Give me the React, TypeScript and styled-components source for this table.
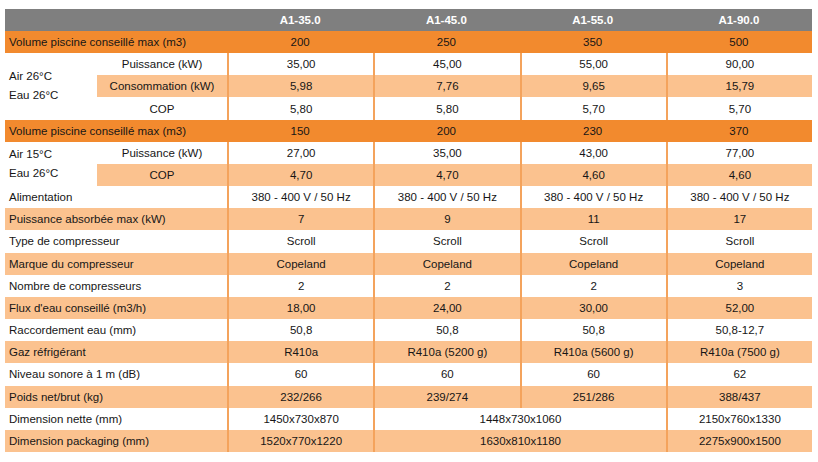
import React from "react";
import styled, { createGlobalStyle, css } from "styled-components";

const GlobalStyle = createGlobalStyle`
  html, body { margin: 0; padding: 0; background: #ffffff; }
  body { font-family: "Liberation Sans", Arial, sans-serif; }
`;

type Tone = "gray" | "orange" | "light" | "white";

const toneColor: Record<Tone, string> = {
  gray: "#7f7f7f",
  orange: "#f28a2e",
  light: "#fbc28f",
  white: "#ffffff",
};

const Page = styled.div`
  padding: 9px 0 0 5px;
`;

const Table = styled.div`
  display: grid;
  width: 807px;
  grid-template-columns: 92px 130px repeat(4, 1fr);
  grid-template-rows: 22px;
  grid-auto-rows: 22.16px;
  font-size: 11.5px;
  color: #161616;
`;

const Cell = styled.div<{
  $tone: Tone;
  $align?: "left" | "center";
  $span?: number;
  $line?: boolean;
}>`
  display: flex;
  align-items: center;
  justify-content: ${(p) => (p.$align === "left" ? "flex-start" : "center")};
  padding-left: ${(p) => (p.$align === "left" ? "4px" : "0")};
  background: ${(p) => toneColor[p.$tone]};
  white-space: nowrap;
  overflow: hidden;
  ${(p) => p.$span && css`grid-column: span ${p.$span};`}
  ${(p) => p.$line && css`border-left: 2px solid #f4a35c;`}
`;

const HeadCell = styled(Cell)`
  color: #ffffff;
  font-weight: bold;
`;

const CondCell = styled.div<{ $rows: number }>`
  grid-row: span ${(p) => p.$rows};
  display: flex;
  flex-direction: column;
  justify-content: center;
  padding-left: 4px;
  line-height: 19px;
  background: #ffffff;
`;

type Val = string | { v: string; span: number };

type SimpleRow = { kind: "simple"; label: string; values: Val[]; tone: Tone };
type GroupRow = {
  kind: "group";
  cond: string[];
  subs: { label: string; values: string[]; tone: Tone }[];
};
type Row = SimpleRow | GroupRow;

const models = ["A1-35.0", "A1-45.0", "A1-55.0", "A1-90.0"];

const rows: Row[] = [
  { kind: "simple", label: "Volume piscine conseillé max (m3)", values: ["200", "250", "350", "500"], tone: "orange" },
  {
    kind: "group",
    cond: ["Air 26°C", "Eau 26°C"],
    subs: [
      { label: "Puissance (kW)", values: ["35,00", "45,00", "55,00", "90,00"], tone: "white" },
      { label: "Consommation (kW)", values: ["5,98", "7,76", "9,65", "15,79"], tone: "light" },
      { label: "COP", values: ["5,80", "5,80", "5,70", "5,70"], tone: "white" },
    ],
  },
  { kind: "simple", label: "Volume piscine conseillé max (m3)", values: ["150", "200", "230", "370"], tone: "orange" },
  {
    kind: "group",
    cond: ["Air 15°C", "Eau 26°C"],
    subs: [
      { label: "Puissance (kW)", values: ["27,00", "35,00", "43,00", "77,00"], tone: "white" },
      { label: "COP", values: ["4,70", "4,70", "4,60", "4,60"], tone: "light" },
    ],
  },
  { kind: "simple", label: "Alimentation", values: ["380 - 400 V / 50 Hz", "380 - 400 V / 50 Hz", "380 - 400 V / 50 Hz", "380 - 400 V / 50 Hz"], tone: "white" },
  { kind: "simple", label: "Puissance absorbée max (kW)", values: ["7", "9", "11", "17"], tone: "light" },
  { kind: "simple", label: "Type de compresseur", values: ["Scroll", "Scroll", "Scroll", "Scroll"], tone: "white" },
  { kind: "simple", label: "Marque du compresseur", values: ["Copeland", "Copeland", "Copeland", "Copeland"], tone: "light" },
  { kind: "simple", label: "Nombre de compresseurs", values: ["2", "2", "2", "3"], tone: "white" },
  { kind: "simple", label: "Flux d'eau conseillé (m3/h)", values: ["18,00", "24,00", "30,00", "52,00"], tone: "light" },
  { kind: "simple", label: "Raccordement eau (mm)", values: ["50,8", "50,8", "50,8", "50,8-12,7"], tone: "white" },
  { kind: "simple", label: "Gaz réfrigérant", values: ["R410a", "R410a (5200 g)", "R410a (5600 g)", "R410a (7500 g)"], tone: "light" },
  { kind: "simple", label: "Niveau sonore à 1 m (dB)", values: ["60", "60", "60", "62"], tone: "white" },
  { kind: "simple", label: "Poids net/brut (kg)", values: ["232/266", "239/274", "251/286", "388/437"], tone: "light" },
  { kind: "simple", label: "Dimension nette (mm)", values: ["1450x730x870", { v: "1448x730x1060", span: 2 }, "2150x760x1330"], tone: "white" },
  { kind: "simple", label: "Dimension packaging (mm)", values: ["1520x770x1220", { v: "1630x810x1180", span: 2 }, "2275x900x1500"], tone: "light" },
];

function ValueCells({ values, tone }: { values: Val[]; tone: Tone }) {
  const line = tone !== "orange";
  return (
    <>
      {values.map((val, i) =>
        typeof val === "string" ? (
          <Cell key={i} $tone={tone} $line={line}>
            {val}
          </Cell>
        ) : (
          <Cell key={i} $tone={tone} $line={line} $span={val.span}>
            {val.v}
          </Cell>
        )
      )}
    </>
  );
}

export default function App() {
  return (
    <>
      <GlobalStyle />
      <Page>
        <Table>
          <HeadCell $tone="gray" $span={2} />
          {models.map((m) => (
            <HeadCell key={m} $tone="gray">
              {m}
            </HeadCell>
          ))}
          {rows.map((row, ri) =>
            row.kind === "simple" ? (
              <React.Fragment key={ri}>
                <Cell $tone={row.tone} $align="left" $span={2}>
                  {row.label}
                </Cell>
                <ValueCells values={row.values} tone={row.tone} />
              </React.Fragment>
            ) : (
              <React.Fragment key={ri}>
                <CondCell $rows={row.subs.length}>
                  {row.cond.map((c) => (
                    <span key={c}>{c}</span>
                  ))}
                </CondCell>
                {row.subs.map((s, si) => (
                  <React.Fragment key={si}>
                    <Cell $tone={s.tone}>{s.label}</Cell>
                    <ValueCells values={s.values} tone={s.tone} />
                  </React.Fragment>
                ))}
              </React.Fragment>
            )
          )}
        </Table>
      </Page>
    </>
  );
}
